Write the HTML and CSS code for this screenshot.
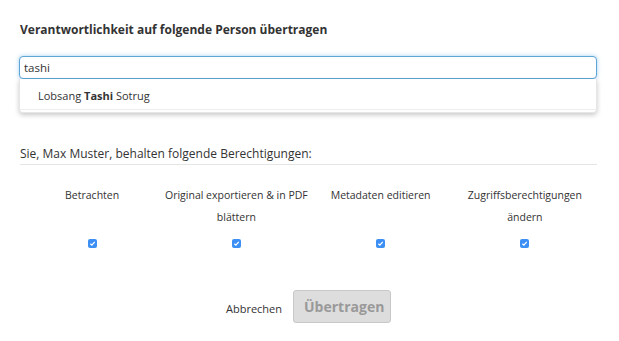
FILE: index.html
```html
<!DOCTYPE html>
<html lang="de">
<head>
    <meta charset="UTF-8">
    <title>Verantwortlichkeit übertragen</title>
    <link rel="stylesheet" href="styles.css">
</head>
<body>
    <div class="dialog">
        <h2 class="title">Verantwortlichkeit auf folgende Person übertragen</h2>

        <div class="search">
            <input type="text" class="search-input" value="tashi">
            <ul class="suggestions">
                <li class="suggestion">Lobsang <strong>Tashi</strong> Sotrug</li>
            </ul>
        </div>

        <h3 class="subtitle">Sie, Max Muster, behalten folgende Berechtigungen:</h3>

        <div class="permissions">
            <div class="permission">
                <span class="permission-label">Betrachten</span>
                <span class="check"><svg viewBox="0 0 10 10"><path d="M2.6 5.2 L4.3 6.8 L7.5 3.2" /></svg></span>
            </div>
            <div class="permission">
                <span class="permission-label">Original exportieren &amp; in PDF blättern</span>
                <span class="check"><svg viewBox="0 0 10 10"><path d="M2.6 5.2 L4.3 6.8 L7.5 3.2" /></svg></span>
            </div>
            <div class="permission">
                <span class="permission-label">Metadaten editieren</span>
                <span class="check"><svg viewBox="0 0 10 10"><path d="M2.6 5.2 L4.3 6.8 L7.5 3.2" /></svg></span>
            </div>
            <div class="permission">
                <span class="permission-label">Zugriffsberechtigungen ändern</span>
                <span class="check"><svg viewBox="0 0 10 10"><path d="M2.6 5.2 L4.3 6.8 L7.5 3.2" /></svg></span>
            </div>
        </div>

        <div class="actions">
            <a href="#" class="cancel">Abbrechen</a>
            <button class="btn" disabled>Übertragen</button>
        </div>
    </div>
</body>
</html>
```

FILE: styles.css
```css
* {
    margin: 0;
    padding: 0;
    box-sizing: border-box;
}

body {
    font-family: "Open Sans", sans-serif;
    background: white;
    color: #333;
}

.dialog {
    padding: 21px 22px 0 20px;
}

.title {
    font-size: 12px;
    font-weight: 700;
    line-height: 18px;
    color: #333;
    margin-bottom: 17px;
}

.search {
    position: relative;
    margin-left: -1px;
    height: 89px;
}

.search-input {
    display: block;
    width: 100%;
    height: 23px;
    padding: 0 4px;
    font-family: "Open Sans", sans-serif;
    font-size: 11.5px;
    color: #333;
    border: 1px solid #5ea6d6;
    border-radius: 4px;
    outline: none;
    box-shadow: 0 0 4px rgba(102, 175, 233, 0.6);
}

.suggestions {
    list-style: none;
    background: white;
    border-radius: 0 0 4px 4px;
    box-shadow: 0 2px 5px rgba(0, 0, 0, 0.22);
    border: 1px solid #e6e6e6;
    border-top: none;
}

.suggestion {
    font-size: 11px;
    line-height: 26px;
    padding: 4px 18px 0;
    border-bottom: 1px solid #eee;
    margin-bottom: 2px;
}

.suggestion strong {
    font-weight: 700;
}

.subtitle {
    font-size: 12px;
    font-weight: 400;
    line-height: 18px;
    padding-bottom: 1px;
    border-bottom: 1px solid #e5e5e5;
}

.permissions {
    display: grid;
    grid-template-columns: repeat(4, 1fr);
    padding-top: 19px;
}

.permission {
    display: flex;
    flex-direction: column;
    align-items: center;
    text-align: center;
}

.permission-label {
    font-size: 10.5px;
    line-height: 22px;
    height: 44px;
}

.check {
    display: block;
    width: 9px;
    height: 9px;
    margin-top: 11px;
    border-radius: 2px;
    background: #3b8ff5;
}

.check svg {
    display: block;
    width: 9px;
    height: 9px;
}

.check path {
    fill: none;
    stroke: white;
    stroke-width: 1.4;
}

.actions {
    display: flex;
    justify-content: center;
    align-items: center;
    gap: 11px;
    margin-top: 42px;
}

.cancel {
    font-size: 11px;
    color: #333;
    text-decoration: none;
    margin-top: 4px;
}

.btn {
    font-family: "Open Sans", sans-serif;
    font-size: 14px;
    font-weight: 700;
    color: #999;
    background: #ddd;
    border: 1px solid #c8c8c8;
    border-radius: 3px;
    padding: 0 10px;
    height: 33px;
    width: 98px;
    cursor: not-allowed;
}
```
